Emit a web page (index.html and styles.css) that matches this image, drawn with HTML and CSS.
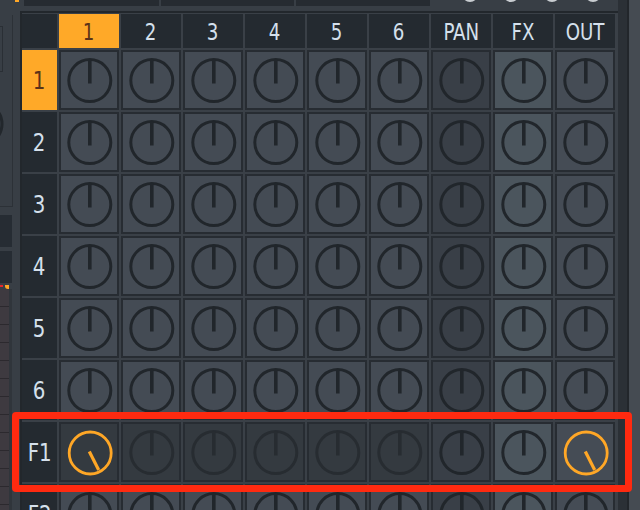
FILE: index.html
```html
<!DOCTYPE html>
<html>
<head>
<meta charset="utf-8">
<link rel="stylesheet" href="styles.css">
</head>
<body>
<svg class="defs" width="0" height="0">
  <symbol id="k" viewBox="0 0 56 56">
    <circle cx="28.8" cy="28.6" r="21" fill="none" stroke="currentColor" stroke-width="3"/>
    <line x1="28.8" y1="7.6" x2="28.8" y2="31.5" stroke="currentColor" stroke-width="3.6"/>
  </symbol>
  <symbol id="ko" viewBox="0 0 56 56">
    <circle cx="29.2" cy="29" r="21" fill="none" stroke="currentColor" stroke-width="2.8"/>
    <line x1="28.3" y1="27.6" x2="37.7" y2="46" stroke="currentColor" stroke-width="3.2"/>
  </symbol>
</svg>
<div class="app">
  <div class="content">
    <div class="topbar">
      <span class="tb-mark"></span>
      <span class="tb-box w1"></span>
      <span class="tb-box w2"></span>
      <span class="tb-box w3"></span>
      <div class="tb-knobs">
        <span class="tb-knob"></span>
        <span class="tb-knob"></span>
        <span class="tb-knob"></span>
        <span class="tb-knob"></span>
      </div>
    </div>
    <div class="main">
      <div class="side">
        <div class="side-panel">
          <span class="sp-box"></span>
          <svg class="sp-knob" width="12" height="60" viewBox="0 0 12 60"><circle cx="-19" cy="30" r="21" fill="none" stroke="#22272c" stroke-width="3"/></svg>
        </div>
        <div class="side-box"></div>
        <div class="side-box"></div>
        <div class="side-marks"><span class="m-red"></span><span class="m-org"></span></div>
        <div class="roll"><div class="roll-keys"></div><div class="roll-edge"></div></div>
      </div>
      <div class="panel">
        <div class="grid">
          <div class="hd corner"></div>
          <div class="hd sel"><span>1</span></div>
          <div class="hd"><span>2</span></div>
          <div class="hd"><span>3</span></div>
          <div class="hd"><span>4</span></div>
          <div class="hd"><span>5</span></div>
          <div class="hd"><span>6</span></div>
          <div class="hd"><span>PAN</span></div>
          <div class="hd"><span>FX</span></div>
          <div class="hd"><span>OUT</span></div>

          <div class="lb sel"><span>1</span></div>
          <div class="c"><svg class="kn"><use href="#k"/></svg></div>
          <div class="c"><svg class="kn"><use href="#k"/></svg></div>
          <div class="c"><svg class="kn"><use href="#k"/></svg></div>
          <div class="c"><svg class="kn"><use href="#k"/></svg></div>
          <div class="c"><svg class="kn"><use href="#k"/></svg></div>
          <div class="c"><svg class="kn"><use href="#k"/></svg></div>
          <div class="c pan"><svg class="kn"><use href="#k"/></svg></div>
          <div class="c fx"><svg class="kn"><use href="#k"/></svg></div>
          <div class="c out"><svg class="kn"><use href="#k"/></svg></div>

          <div class="lb"><span>2</span></div>
          <div class="c"><svg class="kn"><use href="#k"/></svg></div>
          <div class="c"><svg class="kn"><use href="#k"/></svg></div>
          <div class="c"><svg class="kn"><use href="#k"/></svg></div>
          <div class="c"><svg class="kn"><use href="#k"/></svg></div>
          <div class="c"><svg class="kn"><use href="#k"/></svg></div>
          <div class="c"><svg class="kn"><use href="#k"/></svg></div>
          <div class="c pan"><svg class="kn"><use href="#k"/></svg></div>
          <div class="c fx"><svg class="kn"><use href="#k"/></svg></div>
          <div class="c out"><svg class="kn"><use href="#k"/></svg></div>

          <div class="lb"><span>3</span></div>
          <div class="c"><svg class="kn"><use href="#k"/></svg></div>
          <div class="c"><svg class="kn"><use href="#k"/></svg></div>
          <div class="c"><svg class="kn"><use href="#k"/></svg></div>
          <div class="c"><svg class="kn"><use href="#k"/></svg></div>
          <div class="c"><svg class="kn"><use href="#k"/></svg></div>
          <div class="c"><svg class="kn"><use href="#k"/></svg></div>
          <div class="c pan"><svg class="kn"><use href="#k"/></svg></div>
          <div class="c fx"><svg class="kn"><use href="#k"/></svg></div>
          <div class="c out"><svg class="kn"><use href="#k"/></svg></div>

          <div class="lb"><span>4</span></div>
          <div class="c"><svg class="kn"><use href="#k"/></svg></div>
          <div class="c"><svg class="kn"><use href="#k"/></svg></div>
          <div class="c"><svg class="kn"><use href="#k"/></svg></div>
          <div class="c"><svg class="kn"><use href="#k"/></svg></div>
          <div class="c"><svg class="kn"><use href="#k"/></svg></div>
          <div class="c"><svg class="kn"><use href="#k"/></svg></div>
          <div class="c pan"><svg class="kn"><use href="#k"/></svg></div>
          <div class="c fx"><svg class="kn"><use href="#k"/></svg></div>
          <div class="c out"><svg class="kn"><use href="#k"/></svg></div>

          <div class="lb"><span>5</span></div>
          <div class="c"><svg class="kn"><use href="#k"/></svg></div>
          <div class="c"><svg class="kn"><use href="#k"/></svg></div>
          <div class="c"><svg class="kn"><use href="#k"/></svg></div>
          <div class="c"><svg class="kn"><use href="#k"/></svg></div>
          <div class="c"><svg class="kn"><use href="#k"/></svg></div>
          <div class="c"><svg class="kn"><use href="#k"/></svg></div>
          <div class="c pan"><svg class="kn"><use href="#k"/></svg></div>
          <div class="c fx"><svg class="kn"><use href="#k"/></svg></div>
          <div class="c out"><svg class="kn"><use href="#k"/></svg></div>

          <div class="lb"><span>6</span></div>
          <div class="c"><svg class="kn"><use href="#k"/></svg></div>
          <div class="c"><svg class="kn"><use href="#k"/></svg></div>
          <div class="c"><svg class="kn"><use href="#k"/></svg></div>
          <div class="c"><svg class="kn"><use href="#k"/></svg></div>
          <div class="c"><svg class="kn"><use href="#k"/></svg></div>
          <div class="c"><svg class="kn"><use href="#k"/></svg></div>
          <div class="c pan"><svg class="kn"><use href="#k"/></svg></div>
          <div class="c fx"><svg class="kn"><use href="#k"/></svg></div>
          <div class="c out"><svg class="kn"><use href="#k"/></svg></div>

          <div class="lb"><span>F1</span></div>
          <div class="c dim"><svg class="kn on"><use href="#ko"/></svg></div>
          <div class="c dim"><svg class="kn"><use href="#k"/></svg></div>
          <div class="c dim"><svg class="kn"><use href="#k"/></svg></div>
          <div class="c dim"><svg class="kn"><use href="#k"/></svg></div>
          <div class="c dim"><svg class="kn"><use href="#k"/></svg></div>
          <div class="c dim"><svg class="kn"><use href="#k"/></svg></div>
          <div class="c pan"><svg class="kn"><use href="#k"/></svg></div>
          <div class="c fx"><svg class="kn"><use href="#k"/></svg></div>
          <div class="c out"><svg class="kn on"><use href="#ko"/></svg></div>

          <div class="lb"><span>F2</span></div>
          <div class="c"><svg class="kn"><use href="#k"/></svg></div>
          <div class="c"><svg class="kn"><use href="#k"/></svg></div>
          <div class="c"><svg class="kn"><use href="#k"/></svg></div>
          <div class="c"><svg class="kn"><use href="#k"/></svg></div>
          <div class="c"><svg class="kn"><use href="#k"/></svg></div>
          <div class="c"><svg class="kn"><use href="#k"/></svg></div>
          <div class="c pan"><svg class="kn"><use href="#k"/></svg></div>
          <div class="c fx"><svg class="kn"><use href="#k"/></svg></div>
          <div class="c out"><svg class="kn"><use href="#k"/></svg></div>
        </div>
      </div>
    </div>
  </div>
  <div class="rstrip">
    <div class="rs-dark"></div>
    <div class="rs-line"></div>
    <div class="rs-gray"></div>
  </div>
</div>
<div class="highlight"></div>
</body>
</html>
```
FILE: styles.css
```css
* { box-sizing: border-box; }
html, body { margin: 0; padding: 0; }
body {
  width: 640px;
  height: 510px;
  overflow: hidden;
  background: #383e45;
  position: relative;
  font-family: "Liberation Sans Narrow", "DejaVu Sans Condensed", "Liberation Sans", sans-serif;
}
.defs { position: absolute; width: 0; height: 0; overflow: hidden; }

.app { display: flex; height: 510px; }
.content { width: 618px; display: flex; flex-direction: column; }

/* top strip */
.topbar { height: 11px; display: flex; align-items: flex-start; flex: none; }
.tb-mark { width: 4px; height: 2px; background: #ffa726; margin-left: 15px; }
.tb-box { height: 6px; background: #262b31; }
.tb-box.w1 { width: 135px; margin-left: 5px; }
.tb-box.w2 { width: 133px; margin-left: 2px; }
.tb-box.w3 { width: 134px; margin-left: 2px; }
.tb-knobs { display: flex; height: 2px; overflow: hidden; align-items: flex-end; margin-left: 32px; gap: 25px; }
.tb-knob { width: 16px; height: 16px; border-radius: 50%; background: #c9cdd1; flex: none; }

.main { flex: 1; display: flex; min-height: 0; }

/* left strip */
.side { width: 20px; display: flex; flex-direction: column; flex: none; }
.side-panel {
  width: 13px; height: 192px; margin-top: 4px;
  border-right: 1px solid #2c3137; border-bottom: 1px solid #2c3137;
  display: flex; flex-direction: column; overflow: hidden;
}
.sp-box { width: 3px; height: 46px; margin-top: 11px; border: 1px solid #2a2f35; border-left: 0; flex: none; }
.sp-knob { margin-top: 22px; flex: none; }
.side-box { width: 12px; height: 32px; background: #262c33; margin-top: 8px; }
.side-box + .side-box { margin-top: 4px; }
.side-marks { display: flex; gap: 2px; height: 4px; margin-top: 2px; }
.m-red { width: 3px; height: 2px; background: #e8262a; }
.m-org { width: 4px; height: 4px; background: #ffa726; border-radius: 0 0 0 3px; }
.roll { flex: 1; display: flex; width: 12px; }
.roll-keys {
  width: 9px;
  background: repeating-linear-gradient(to bottom, #3e3a40 0 17px, #2c292e 17px 18px);
}
.roll-edge { width: 3px; background: #30353b; }

/* grid panel */
.panel {
  flex: 1;
  background: #3a4047;
  border-left: 2px solid #22272c;
  border-top: 2px solid #22272c;
  padding-top: 1px;
  overflow: hidden;
}
.grid {
  display: grid;
  grid-template-columns: 35px repeat(9, 60px);
  grid-template-rows: 34px repeat(8, 60px);
  gap: 2px;
}
.hd, .lb {
  background: #242a30;
  color: #d5e0ec;
  display: flex;
  align-items: center;
  justify-content: center;
}
.hd span, .lb span { display: inline-block; transform: scaleX(0.88); }
.hd { font-size: 23px; padding-top: 2px; }
.lb { font-size: 25px; }
.hd.sel, .lb.sel { background: #ffa928; color: #5b3219; }

.c {
  border: 2px solid #272c32;
  background: #444b54;
  color: #21262b;
}
.c.pan { background: #393f47; }
.c.fx { background: #4b555d; }
.c.out { background: #454c55; }
.c.dim { background: #343a40; color: #272c31; }
.kn { display: block; width: 56px; height: 56px; }
.kn.on { color: #ffa726; }

/* right strip */
.rstrip { flex: 1; display: flex; }
.rs-dark { width: 9px; background: #2b3036; }
.rs-line { width: 2px; background: #22262b; }
.rs-gray { flex: 1; background: #454b52; }

/* red highlight overlay */
.highlight {
  position: absolute;
  left: 12px;
  top: 412px;
  width: 620px;
  height: 80px;
  border: 7px solid #ff2a10;
  border-radius: 4px;
}
```
